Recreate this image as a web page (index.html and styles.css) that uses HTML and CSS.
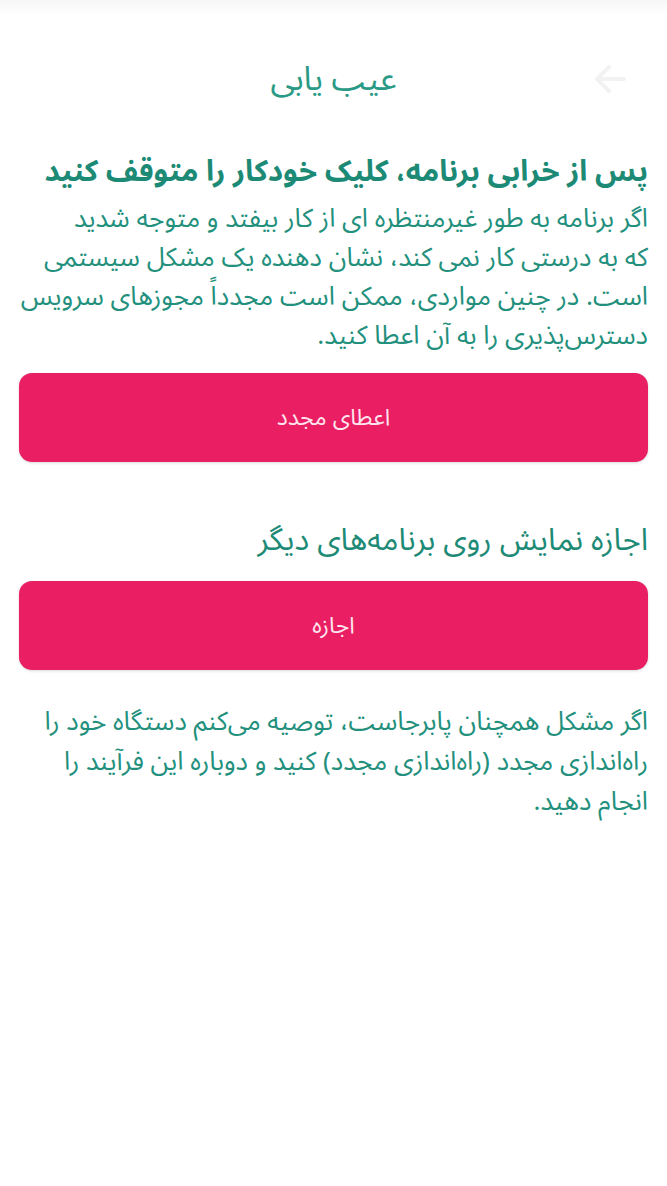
FILE: index.html
```html
<!DOCTYPE html>
<html lang="fa" dir="rtl">
<head>
    <meta charset="UTF-8">
    <meta name="viewport" content="width=device-width, initial-scale=1.0">
    <title>عیب یابی</title>
    <link rel="stylesheet" href="styles.css">
</head>
<body>

    <!-- نوار بالا -->
    <div class="status-bar"></div>

    <header class="top-bar">
        <button class="back-btn" aria-label="بازگشت">
            <svg width="32" height="32" viewBox="0 0 32 32">
                <path d="M3 16 H30 M3 16 L15 4 M3 16 L15 28" fill="none" stroke="#f2f2f2" stroke-width="4" stroke-linecap="round" stroke-linejoin="round"/>
            </svg>
        </button>
        <h1 class="page-title">عیب یابی</h1>
    </header>

    <main class="content">
        <section class="block">
            <h2 class="block-title bold">پس از خرابی برنامه، کلیک خودکار را متوقف کنید</h2>
            <p class="block-text">اگر برنامه به طور غیرمنتظره ای از کار بیفتد و متوجه شدید<br>که به درستی کار نمی کند، نشان دهنده یک مشکل سیستمی<br>است. در چنین مواردی، ممکن است مجدداً مجوزهای سرویس<br>دسترس‌پذیری را به آن اعطا کنید.</p>
            <button class="pink-btn">اعطای مجدد</button>
        </section>

        <section class="block second">
            <h2 class="block-title">اجازه نمایش روی برنامه‌های دیگر</h2>
            <button class="pink-btn">اجازه</button>
        </section>

        <p class="block-text note">اگر مشکل همچنان پابرجاست، توصیه می‌کنم دستگاه خود را<br>راه‌اندازی مجدد (راه‌اندازی مجدد) کنید و دوباره این فرآیند را<br>انجام دهید.</p>
    </main>

</body>
</html>
```

FILE: styles.css
```css
body {
    margin: 0;
    padding: 0;
    background-color: #ffffff;
    color: #1f8c78;
    font-family: "Noto Sans Arabic", "DejaVu Sans", sans-serif;
    width: 667px;
    height: 1186px;
    overflow: hidden;
}

.status-bar {
    height: 14px;
    background: linear-gradient(#f6f6f6, #ffffff);
}

.top-bar {
    position: relative;
    padding-top: 46px;
    display: flex;
    justify-content: center;
}

.back-btn {
    position: absolute;
    right: 41px;
    top: 49px;
    background: none;
    border: none;
    padding: 0;
}

.page-title {
    margin: 0;
    font-size: 33px;
    line-height: 40px;
    font-weight: normal;
    color: #2a9a86;
}

.content {
    padding: 52px 19px 0 19px;
}

.block-title {
    margin: 0;
    font-size: 29.5px;
    line-height: 40px;
    font-weight: normal;
    color: #1d8a76;
    white-space: nowrap;
}

.block-title.bold {
    font-weight: bold;
}

.second .block-title {
    font-size: 30.8px;
}

.block-text {
    margin: 7px 0 0 0;
    font-size: 26px;
    line-height: 39px;
    color: #22907c;
    white-space: nowrap;
}

.pink-btn {
    display: block;
    width: 100%;
    height: 89px;
    margin-top: 18px;
    background-color: #e91e63;
    border: none;
    border-radius: 13px;
    color: #ffe4ee;
    font-family: inherit;
    font-size: 23px;
    box-shadow: 0 1px 3px rgba(0, 0, 0, 0.15);
}

.second {
    margin-top: 59px;
}

.second .pink-btn {
    margin-top: 20px;
}

.note {
    margin-top: 32px;
    line-height: 40px;
}
```
